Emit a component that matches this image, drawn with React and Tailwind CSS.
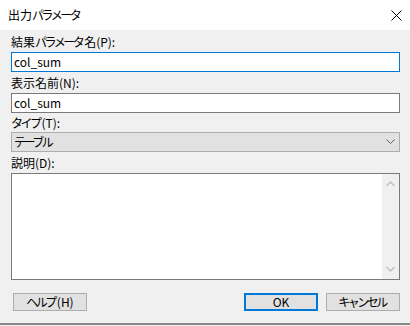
import React from 'react';

const font = { fontFamily: '"Noto Sans CJK JP", "Liberation Sans", sans-serif' };

// kana in the dialog font run narrower than kanji
const K = ({ children }) => <span className="tracking-[-2.5px] pr-[2px]">{children}</span>;

const Label = ({ children, className = '' }) => (
  <div className={`h-[16px] text-[12px] leading-[16px] text-black ${className}`}>{children}</div>
);

const TextBox = ({ value, focused, className = '' }) => (
  <div
    className={`h-[20px] bg-white border pl-[2px] text-[12px] leading-[18px] text-black ${
      focused ? 'border-[#0078d7]' : 'border-[#7a7a7a]'
    } ${className}`}
  >
    {value}
  </div>
);

const Button = ({ children, primary }) => (
  <div
    className={`w-[74px] h-[18px] flex items-center justify-center bg-[#e1e1e1] text-[12px] leading-none text-black ${
      primary ? 'border-2 border-[#0078d7]' : 'border border-[#adadad]'
    }`}
  >
    {children}
  </div>
);

export default function App() {
  return (
    <div className="w-[410px] h-[326px] bg-[#f0f0f0] flex flex-col overflow-hidden" style={font}>
      {/* title bar */}
      <div className="h-[30px] bg-white flex items-center justify-between pl-[8px] pr-[8px]">
        <span className="text-[12px] text-black">
          出力<K>パラメータ</K>
        </span>
        <svg width="11" height="11" viewBox="0 0 11 11">
          <path d="M0.5 0.5 L10.5 10.5 M10.5 0.5 L0.5 10.5" stroke="#000" strokeWidth="1" />
        </svg>
      </div>

      <div className="flex flex-col pl-[11px] pr-[10px]">
        <Label className="mt-[4px]">
          結果<K>パラメータ</K>名(P):
        </Label>
        <TextBox className="mt-[2px]" value="col_sum" focused />

        <Label className="mt-[3px]">表示名前(N):</Label>
        <TextBox className="mt-[2px]" value="col_sum" />

        <Label className="mt-[2px]">
          <K>タイプ</K>(T):
        </Label>
        <div className="mt-[1px] h-[20px] bg-[#e1e1e1] border border-[#adadad] flex items-center justify-between pl-[2px] pr-[4px] text-[12px] text-black">
          <span>
            <K>テーブル</K>
          </span>
          <svg width="9" height="6" viewBox="0 0 9 6">
            <path d="M0.5 0.5 L4.5 4.5 L8.5 0.5" stroke="#606060" strokeWidth="1" fill="none" />
          </svg>
        </div>

        <Label className="mt-[3px]">説明(D):</Label>
        <div className="mt-[2px] h-[107px] bg-white border border-[#7a7a7a] flex justify-end">
          <div className="w-[17px] bg-[#f0f0f0] flex flex-col items-center justify-between py-[7px]">
            <svg width="9" height="6" viewBox="0 0 9 6">
              <path d="M0.5 5 L4.5 1 L8.5 5" stroke="#c2c2c2" strokeWidth="1.5" fill="none" />
            </svg>
            <svg width="9" height="6" viewBox="0 0 9 6">
              <path d="M0.5 1 L4.5 5 L8.5 1" stroke="#c2c2c2" strokeWidth="1.5" fill="none" />
            </svg>
          </div>
        </div>

        <div className="mt-[13px] flex items-center">
          <div className="ml-[2px]">
            <Button>
              <K>ヘルプ</K>(H)
            </Button>
          </div>
          <div className="ml-auto flex gap-[8px]">
            <Button primary>OK</Button>
            <Button>
              <K>キャンセル</K>
            </Button>
          </div>
        </div>
      </div>

      <div className="mt-[12px] h-[2px] bg-[#8a8a8a]" />
    </div>
  );
}
